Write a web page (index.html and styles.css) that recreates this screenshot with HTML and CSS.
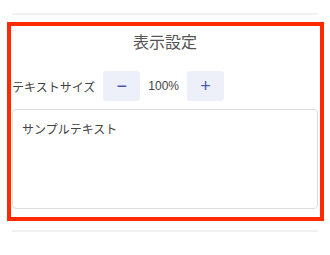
FILE: index.html
```html
<!DOCTYPE html>
<html lang="ja">
  <head>
    <meta charset="UTF-8" />
    <meta name="viewport" content="width=device-width, initial-scale=1.0" />
    <title>表示設定</title>
    <link rel="stylesheet" href="styles.css">
  </head>
  <body>
    <div class="divider"></div>
    <section class="settings">
      <h2 class="settings-title">表示設定</h2>
      <div class="size-row">
        <span class="size-label">テキストサイズ</span>
        <button class="size-btn" id="decrease">−</button>
        <span class="size-value" id="sizeValue">100%</span>
        <button class="size-btn" id="increase">+</button>
      </div>
      <textarea class="preview" id="preview">サンプルテキスト</textarea>
    </section>
    <div class="divider"></div>
  </body>
</html>
```

FILE: styles.css
```css
body {
  font-family: "Liberation Sans", "Noto Sans CJK JP", sans-serif;
  margin: 0;
  padding: 13px 12px 0;
  background-color: #ffffff;
  color: #444444;
}

.divider {
  height: 2px;
  background-color: #f1f1f1;
}

.settings {
  margin: 7px -6px 9px -5px;
  padding: 4px 2px 8px 1px;
  border: 4px solid #ff2a00;
}

.settings-title {
  margin: 0;
  font-size: 16px;
  font-weight: normal;
  line-height: 26px;
  text-align: center;
  color: #555555;
}

.size-row {
  display: flex;
  align-items: center;
  gap: 8px;
  margin-top: 15px;
}

.size-label {
  font-size: 12px;
  color: #444444;
}

.size-btn {
  width: 37px;
  height: 30px;
  padding: 0;
  border: none;
  border-radius: 3px;
  background-color: #eef0f9;
  color: #4a5ab6;
  font-family: "Liberation Sans", sans-serif;
  font-size: 18px;
  line-height: 30px;
  cursor: pointer;
}

.size-value {
  font-size: 12px;
  color: #444444;
}

.preview {
  display: block;
  box-sizing: border-box;
  width: 100%;
  height: 100px;
  margin-top: 8px;
  padding: 10px 9px;
  border: 1px solid #dddddd;
  border-radius: 4px;
  font-family: "Liberation Sans", "Noto Sans CJK JP", sans-serif;
  font-size: 12px;
  color: #444444;
  resize: none;
}
```
